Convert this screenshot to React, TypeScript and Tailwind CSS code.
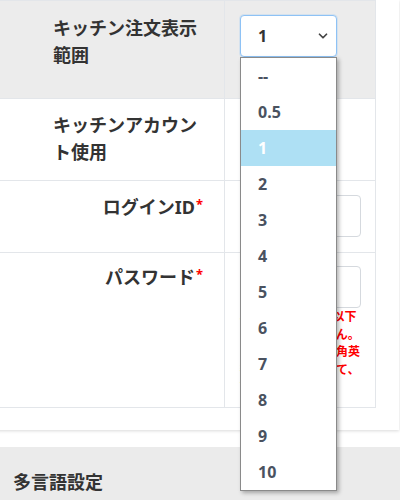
import { ChevronDown } from "lucide-react"

const options = ["--", "0.5", "1", "2", "3", "4", "5", "6", "7", "8", "9", "10"]

function Label({ text, required, wrap }: { text: string; required?: boolean; wrap?: boolean }) {
  if (wrap) {
    return <span className="inline-block w-full text-left">{text}</span>
  }
  return (
    <span>
      {text}
      {required && <span className="ml-[1px] align-top text-[13px] leading-[20px] text-[#ff0000]">*</span>}
    </span>
  )
}

function TextInput() {
  return <div className="h-[42px] w-[121px] rounded-[4px] border border-[#d5d9de] bg-white" />
}

export default function App() {
  return (
    <main
      className="min-h-[500px] overflow-hidden bg-white text-[#333]"
      style={{ fontFamily: '"Noto Sans", "Noto Sans CJK JP", sans-serif' }}
    >
      <section className="-ml-5 w-[419px] bg-white pb-[22px] pl-5 pr-6 shadow-[0_1px_3px_rgba(0,0,0,0.15)]">
        <div className="w-[376px] border-t border-r border-[#e3e6ea] text-[18px] font-bold leading-[27px]">
          <div className="grid h-[98px] grid-cols-[225px_151px] border-b border-[#e3e6ea] bg-[#ececec]">
            <div className="border-r border-[#e3e6ea] pl-[53px] pr-[21px] pt-[14px]">
              <Label text="キッチン注文表示範囲" wrap />
            </div>
            <div className="pl-[15px] pt-[14px]">
              <div className="relative w-[97px]">
                <div className="flex h-[42px] items-center justify-between rounded-[4px] border border-[#8ec2f5] bg-white pl-[17px] pr-[6px] text-[16px] shadow-[0_0_0_1px_rgba(142,194,245,0.25)]">
                  <span>1</span>
                  <ChevronDown className="h-[14px] w-[14px] text-[#444]" strokeWidth={3} />
                </div>
                <ul className="absolute left-0 top-full z-10 w-[97px] border border-[#8a8a8a] bg-white text-[16px] leading-[36px] text-[#4a5260] shadow-[2px_2px_4px_rgba(0,0,0,0.3)]">
                  {options.map((o) => (
                    <li
                      key={o}
                      className={o === "1" ? "h-[36px] bg-[#aee0f4] pl-[17px] text-white" : "h-[36px] pl-[17px]"}
                    >
                      {o}
                    </li>
                  ))}
                </ul>
              </div>
            </div>
          </div>

          <div className="grid h-[82px] grid-cols-[225px_151px] border-b border-[#e3e6ea]">
            <div className="border-r border-[#e3e6ea] pl-[53px] pr-[21px] pt-[13px]">
              <Label text="キッチンアカウント使用" wrap />
            </div>
            <div />
          </div>

          <div className="grid h-[72px] grid-cols-[225px_151px] border-b border-[#e3e6ea]">
            <div className="border-r border-[#e3e6ea] pr-[21px] pt-[13px] text-right">
              <Label text="ログインID" required />
            </div>
            <div className="pl-[15px] pt-[14px]">
              <TextInput />
            </div>
          </div>

          <div className="grid h-[155px] grid-cols-[225px_151px] border-b border-[#e3e6ea]">
            <div className="border-r border-[#e3e6ea] pr-[21px] pt-[11px] text-right">
              <Label text="パスワード" required />
            </div>
            <div className="pl-[15px] pt-[13px]">
              <TextInput />
              <p className="w-[121px] text-[12px] font-bold leading-[17.5px] text-[#ff0000]">
                8文字以上20文字以下で空白は使えません。パスワードには半角英数字・記号を含めて、記号が使えます。
              </p>
            </div>
          </div>
        </div>
      </section>

      <div className="mt-[17px] bg-[#ebebeb] px-[13px] pb-6 pt-[22px]">
        <h2 className="text-[18px] font-bold leading-[27px]">多言語設定</h2>
      </div>
    </main>
  )
}
